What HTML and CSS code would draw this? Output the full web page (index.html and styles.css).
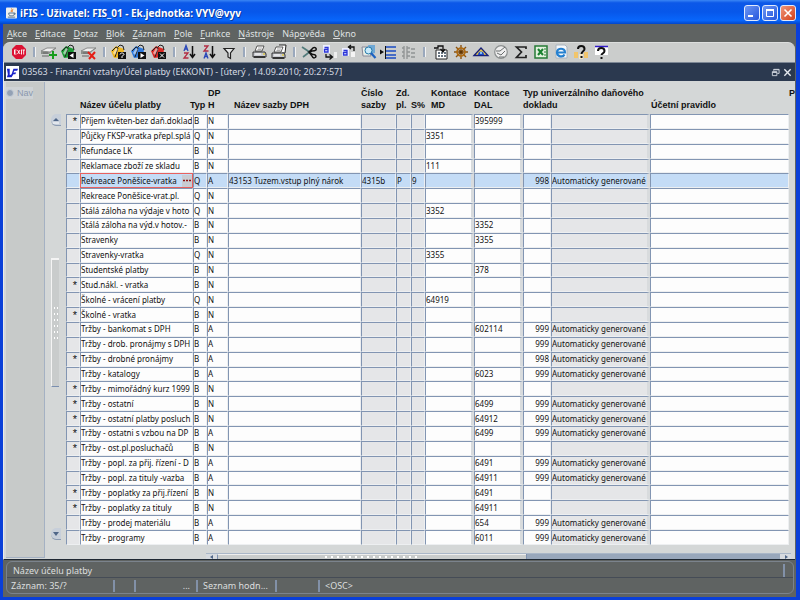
FILE: index.html
```html
<!DOCTYPE html>
<html lang="cs">
<head>
<meta charset="utf-8">
<title>iFIS - Uživatel: FIS_01 - Ek.jednotka: VYV@vyv</title>
<link rel="stylesheet" href="styles.css">
</head>
<body>
<svg class="defs" aria-hidden="true">
  <defs>
    <g id="folder"><path d="M1 7 6 2l8 3-1 8-9 1z" fill="currentColor"/><path d="M2 7l4-4 2 1-3 9M8 3l2-2 3 1 1 4" fill="none" stroke="#222" stroke-width="1"/><path d="M6 4l2 1-3 6-2-2z" fill="#fff" opacity=".55"/></g>
    <g id="rec"><path d="M1 7 7 4h9l-6 4z" fill="#efefef" stroke="#777" stroke-width=".8"/><path d="M1 7v3h8l6-5v-1l-5 4z" fill="#8b8f8b"/><path d="M2 12h7M3 9h5" stroke="#666"/></g>
    <g id="printer"><path d="M5 7 7 2h7l-2 5z" fill="#fff" stroke="#333" stroke-width=".8"/><path d="M8 4h4M7.500 5.500h4" stroke="#888" stroke-width=".7"/><path d="M3 8h12l1 2v3H3z" fill="#c9cbd0" stroke="#222" stroke-width=".9"/><path d="M4 12h11v2H4z" fill="#333"/><path d="M5 10h6" stroke="#fff"/><path d="M13 10h2" stroke="#e6c400"/></g>
  </defs>
</svg>
<div class="window">
  <header class="titlebar">
    <svg class="java" viewBox="0 0 12 12"><rect width="12" height="12" rx="1" fill="#eef0ee"/><path d="M6 1c2 2-2 2 0 4M8 2c-2 1-1 2-1 3" stroke="#e2731c" fill="none"/><path d="M3 6h6c0 3-1 3-3 3S3 9 3 6zM9 6c2 0 1 2 0 2M2 10.500h8" stroke="#4d6b88" fill="none"/></svg>
    <h1>iFIS - Uživatel: FIS_01 - Ek.jednotka: VYV@vyv</h1>
    <div class="winbtns">
      <button aria-label="Minimalizovat"><svg viewBox="0 0 14 14"><path d="M3 10h5" stroke="#fff" stroke-width="2"/></svg></button>
      <button aria-label="Maximalizovat"><svg viewBox="0 0 14 14"><path d="M3 4h8" stroke="#fff" stroke-width="2"/><path d="M3.500 4v6.500h7V4" stroke="#fff" fill="none"/></svg></button>
      <button class="close" aria-label="Zavřít"><svg viewBox="0 0 14 14"><path d="M3.500 3.500l7 7M10.500 3.500l-7 7" stroke="#fff" stroke-width="1.600"/></svg></button>
    </div>
  </header>
  <nav class="menu">
    <a href="#"><u>A</u>kce</a><a href="#"><u>E</u>ditace</a><a href="#"><u>D</u>otaz</a><a href="#"><u>B</u>lok</a><a href="#"><u>Z</u>áznam</a><a href="#"><u>P</u>ole</a><a href="#"><u>F</u>unkce</a><a href="#"><u>N</u>ástroje</a><a href="#">Náp<u>o</u>věda</a><a href="#"><u>O</u>kno</a>
  </nav>
  <div class="toolbar">
    <button aria-label="Konec"><svg viewBox="0 0 18 16"><path d="M6 1h6l4 4v6l-4 4H6l-4-4V5z" fill="#dc1233"/><path d="M4 6h2.500M4 8h2M4 10h2.500M4.500 6v4M7.500 6l2.500 4M10 6l-2.500 4M11.500 5.500v5M12.500 6H15M13.700 6v4.500" stroke="#fff" stroke-width=".9"/></svg></button>
    <i class="sep"></i>
    <button aria-label="Vložit záznam"><svg viewBox="0 0 18 16"><use href="#rec"/><path d="M13 7v8M9 11h8" stroke="#179c1c" stroke-width="2"/></svg></button>
    <button aria-label="Uložit"><svg class="green" viewBox="0 0 18 16"><use href="#folder"/><path d="M8 8h8v7H8z" fill="#111"/><path d="M13.500 9v5l-4-2.500z" fill="#fff"/></svg></button>
    <button aria-label="Smazat záznam"><svg viewBox="0 0 18 16"><use href="#rec"/><path d="M8 8l7 7M15 8l-6 7" stroke="#e51d14" stroke-width="2"/></svg></button>
    <i class="sep"></i>
    <button aria-label="Zadat dotaz"><svg class="yellow" viewBox="0 0 18 16"><use href="#folder"/><path d="M8 8h8v7H8z" fill="#111"/><path d="M10 10.500c0-2 4-2 4 0 0 1-2 1-2 2v1.500" stroke="#fff" fill="none"/></svg></button>
    <button aria-label="Provést dotaz"><svg class="blue" viewBox="0 0 18 16"><use href="#folder"/><path d="M8 8h8v7H8z" fill="#111"/><path d="M10.500 9v5l4-2.500z" fill="#fff"/></svg></button>
    <button aria-label="Zrušit dotaz"><svg class="red" viewBox="0 0 18 16"><use href="#folder"/><path d="M8 8h8v7H8z" fill="#111"/><path d="M10 9.500l4 4M14 9.500l-4 4" stroke="#fff"/></svg></button>
    <i class="sep"></i>
    <button aria-label="Seřadit vzestupně"><svg viewBox="0 0 18 16"><path d="M4 7l2-5.500L8 7M5 5h2.500" stroke="#2947b8" fill="none" stroke-width="1.300"/><path d="M4 9h4l-4 5h4.500" stroke="#b32c43" fill="none" stroke-width="1.300"/><path d="M12.500 2v11M10 10l2.500 3.500L15 10" stroke="#111" fill="none" stroke-width="1.500"/></svg></button>
    <button aria-label="Seřadit sestupně"><svg viewBox="0 0 18 16"><path d="M4 2h4L4 7h4.500" stroke="#b32c43" fill="none" stroke-width="1.300"/><path d="M4 14.500L6 9l2 5.500M5 12.500h2.500" stroke="#2947b8" fill="none" stroke-width="1.300"/><path d="M12.500 2v11M10 10l2.500 3.500L15 10" stroke="#111" fill="none" stroke-width="1.500"/></svg></button>
    <button aria-label="Filtr"><svg viewBox="0 0 18 16"><path d="M4 4.500h10L10.500 9v5.500L8 13V9z" stroke="#222" fill="#e4e6e6" stroke-width="1.200"/></svg></button>
    <i class="sep"></i>
    <button aria-label="Tisk"><svg viewBox="0 0 18 16"><use href="#printer"/></svg></button>
    <button aria-label="Tisk sestavy"><svg viewBox="0 0 18 16"><path d="M9 1h7l-1 8h-3" fill="#fff" stroke="#222"/><use href="#printer" x="-1" y="1"/></svg></button>
    <i class="sep"></i>
    <button aria-label="Vyjmout"><svg viewBox="0 0 18 16"><path d="M2 3l9 6M3 13l9-7" stroke="#527b7b" stroke-width="1.600"/><path d="M9 8l3-3c2-3 5-1 4 1-1 1-3 1-4 1l-3 1 3 2c1 1 3 0 4 2 0 2-3 3-4 0z" stroke="#111" fill="none" stroke-width="1.500"/></svg></button>
    <button aria-label="Kopírovat"><svg viewBox="0 0 18 16"><path d="M3 1h7v8H3z" fill="#eef0ff"/><path d="M4.500 3.500H8V8H4.500V5.500H8" stroke="#2b35d8" fill="none" stroke-width="1.300"/><path d="M6 10v3h6M9.500 10.500l3 2.500-3 2.500" stroke="#111" fill="none" stroke-width="1.300"/><path d="M14 8h3v6h-3z" fill="#eee"/></svg></button>
    <button aria-label="Vložit"><svg viewBox="0 0 18 16"><path d="M2 4h7v8H2z" fill="#eef0ff"/><path d="M3.500 6.500H7V11H3.500V8.500H7" stroke="#2b35d8" fill="none" stroke-width="1.300"/><path d="M8 3h6v4M11 1L8.500 3 11 5" stroke="#111" fill="none" stroke-width="1.300"/><path d="M11 8h4v5h-4z" fill="#f4f4f4"/></svg></button>
    <button aria-label="Hledat"><svg viewBox="0 0 18 16"><path d="M2 3h6l3 9H3z" fill="#e8efe8" stroke="#889"/><path d="M8 1h7v8l-4 1z" fill="#6fa8d5"/><circle cx="8.500" cy="6.500" r="3.500" fill="#c9eafa" stroke="#2278a8"/><path d="M11 9l4.500 5" stroke="#1b61c1" stroke-width="2.200"/></svg></button>
    <button aria-label="Seznam hodnot"><svg viewBox="0 0 18 16"><path d="M6 3h10M6 7h10M6 11h10M6 14h10" stroke="#1c4cc2" stroke-width="1.700"/><path d="M5.500 2v13" stroke="#111"/><path d="M0 5.500l4 2.500-4 2.500z" fill="#111"/></svg></button>
    <button aria-label="Strom"><svg viewBox="0 0 18 16"><path d="M4 2v13M7 2v13M4 4h-2M4 8h-2M4 12h-2M7 4h3M7 8h3M7 12h3M11 5h4M11 9h4M11 13h4" stroke="#909494" fill="none" stroke-width="1.300"/></svg></button>
    <i class="sep"></i>
    <div class="tail">
    <button aria-label="Kalendář"><svg viewBox="0 0 18 16"><path d="M4 6h11v9H4z" fill="#fff" stroke="#222"/><path d="M6 9h2M9 9h2M12 9h2M6 12h2M9 12h2M12 12h2" stroke="#345" stroke-width="1.500"/><path d="M2 4h4V2h5v5M8.500 5l2.500 3 2-3" fill="none" stroke="#111" stroke-width="1.300"/></svg></button>
    <button aria-label="Kormidlo"><svg viewBox="0 0 18 16"><path d="M9 1v14M2 8h14M4 3l10 10M14 3L4 13" stroke="#8a5311" stroke-width="1.400"/><circle cx="9" cy="8" r="4" fill="none" stroke="#b06b10" stroke-width="1.600"/><circle cx="9" cy="8" r="1.500" fill="#5d3505"/></svg></button>
    <button aria-label="Přehled"><svg viewBox="0 0 18 16"><path d="M2 11.500L9 4l7 7.500z" fill="#eecb4b" stroke="#17217a" stroke-width="1.300"/><path d="M6 11a3 3.500 0 016 0z" fill="#1c49c5"/><circle cx="9" cy="9" r="1" fill="#a4e4ff"/></svg></button>
    <button aria-label="Hodiny"><svg viewBox="0 0 18 16"><circle cx="9" cy="8" r="6.300" fill="#eee" stroke="#8b8f8f" stroke-width="1.200"/><path d="M4 7h4l5-4M5 9l4 2 4-4M7 13h5" stroke="#696d6d" fill="none"/></svg></button>
    <button aria-label="Součet"><svg viewBox="0 0 18 16"><path d="M14 5V3H4.500l5 5-5 5.500H14V11" stroke="#222" fill="none" stroke-width="1.700"/></svg></button>
    <button aria-label="Excel"><svg viewBox="0 0 18 16"><path d="M3 2h12v12H3z" fill="#e3f1df" stroke="#267b36" stroke-width="1.500"/><path d="M6 5l5 6M11 5l-5 6" stroke="#1a8130" stroke-width="2"/><path d="M12 5h2M12 8h2M12 11h2" stroke="#267b36"/></svg></button>
    <button aria-label="Prohlížeč"><svg viewBox="0 0 18 16"><path d="M4 1h9l2 2v11H4z" fill="#f5f8fb" stroke="#a9b4c0"/><path d="M5 8.500h8c0-5-8-5-8 0 0 4.500 6 5 7.500 2" stroke="#2580d0" fill="none" stroke-width="2.200"/></svg></button>
    <button aria-label="Nápověda k poli"><svg viewBox="0 0 18 16"><path d="M2 8h4v6H2zM12 8h4v6h-4z" fill="#f1c56b"/><path d="M7 10h4v5H7z" fill="#f4e6c3"/><path d="M6 5c0-4 6.500-4 6.500 0 0 2.500-3 2-3 5" stroke="#111" fill="none" stroke-width="2"/><path d="M8.500 12h2v2h-2z" fill="#111"/></svg></button>
    <button aria-label="Nápověda"><svg viewBox="0 0 18 16"><path d="M3 3h13v8H3z" fill="#fff"/><path d="M3 2.500h13" stroke="#3019c8" stroke-width="1.500"/><path d="M6 7c0-4 6.500-4 6.500 0 0 2.500-3 2-3 4" stroke="#111" fill="none" stroke-width="2"/><path d="M8.500 13h2v2h-2z" fill="#111"/></svg></button>
    </div>
  </div>
  <section class="doc">
    <div class="doctitle">
      <svg class="logo" viewBox="0 0 14 14"><path d="M0 0h14v14H0z" fill="#fff"/><path d="M1 3h3v7l2-1L8 3h5l-1 2H9L8 7h3l-1 2H8l-2 3H1l1-3z" fill="#1720c9"/></svg>
      <h2>03563 - Finanční vztahy/Účel platby (EKKONT) - [úterý , 14.09.2010; 20:27:57]</h2>
      <button aria-label="Obnovit okno"><svg viewBox="0 0 10 10"><path d="M3 3V1.500h6V6H7M1.500 4h5v4.500h-5zM3 2h6M1.500 5h5" stroke="#d5dae2" fill="none"/></svg></button>
      <button aria-label="Zavřít okno"><svg viewBox="0 0 10 10"><path d="M1.500 1.500l7 7M8.500 1.500l-7 7" stroke="#e6eaf0" stroke-width="1.500"/></svg></button>
    </div>
    <div class="body">
      <aside class="side"><button class="nav"><i></i>Nav</button></aside>
      <main class="form">
        <div class="vscroll">
          <button class="arrow" aria-label="Nahoru"><svg viewBox="0 0 10 10"><path d="M2 6l3-3 3 3z" fill="#4f6688"/><path d="M2 8h6" stroke="#fff"/></svg></button>
          <div class="vtrack"><div class="vthumb"><i></i></div></div>
          <button class="arrow" aria-label="Dolů"><svg viewBox="0 0 10 10"><path d="M2 3h6L5 7z" fill="#4f6688"/></svg></button>
        </div>
        <div class="right">
          <table>
            <colgroup><col class="c14"><col class="cname"><col class="c14"><col class="cdp"><col class="crate"><col class="cnum"><col class="c15"><col class="c14"><col class="cacc"><col class="cacc"><col class="cdoc"><col class="cauto"><col><col class="clast"></colgroup>
            <thead><tr><th></th><th id="hname">Název účelu platby</th><th><span class="typ">Typ</span></th><th class="one">DP<br>H</th><th class="in">Název sazby DPH</th><th>Číslo<br>sazby</th><th>Zd.<br>pl.</th><th>S%</th><th class="in">Kontace<br>MD</th><th>Kontace<br>DAL</th><th colspan="2">Typ univerzálního daňového<br>dokladu</th><th class="one">Účetní pravidlo</th><th>P<br>&nbsp;</th></tr></thead>
            <tbody id="rows"></tbody>
          </table>
          <div class="hscroll"><button aria-label="Vlevo"><svg viewBox="0 0 10 6"><path d="M6 1v4L3 3z" fill="#4f6688"/></svg></button><div class="hthumb"><i></i></div><div class="htrack"></div><button aria-label="Vpravo"><svg viewBox="0 0 10 6"><path d="M4 1v4l3-2z" fill="#4f6688"/></svg></button></div>
        </div>
      </main>
    </div>
  </section>
  <footer class="status">
    <div class="hint"><span>Název účelu platby</span></div>
    <div class="cells"><span class="s1">Záznam: 35/?</span><span class="s2"></span><span class="s3">...</span><span class="s4">Seznam hodn...</span><span class="s5"></span><span class="s6">&lt;OSC&gt;</span></div>
  </footer>
</div>
<script src="script.js"></script>
</body>
</html>
```
FILE: styles.css
```css
* { box-sizing: border-box; }
body { margin: 0; font: 9px/12px "Liberation Sans", Arial, sans-serif; color: #1c1c1c; }
h1, h2 { margin: 0; }
button { border: 0; padding: 0; margin: 0; background: none; font: inherit; color: inherit; display: flex; align-items: center; justify-content: center; }
svg { display: block; }
.defs { position: absolute; width: 0; height: 0; }
.window { min-height: 100vh; display: flex; flex-direction: column; background: #5f6362; border: solid #0a3fd8; border-width: 0 4px 3px 3px; }
.titlebar { height: 24px; margin: 0 -4px 0 -3px; padding: 2px 4px 0 6px; display: flex; align-items: center; background: linear-gradient(#3a86f5, #0c58e8 12%, #0757ea 50%, #0866fb 85%, #0346c8); }
.java { width: 11px; height: 12px; }
.titlebar h1 { flex: 1; margin-left: 3px; font: bold 10px/16px "Noto Sans", sans-serif; color: #fff; text-shadow: 1px 1px #0b3a9c; white-space: nowrap; }
.winbtns { display: flex; gap: 2px; }
.winbtns button { width: 16px; height: 16px; border: 1px solid #e2ebfd; border-radius: 3px; background: linear-gradient(135deg, #6d97f3, #2455dd); }
.winbtns .close { background: linear-gradient(135deg, #f0967a, #d3401a); }
.winbtns svg { width: 14px; height: 14px; }
.menu { height: 18px; padding: 2px 4px 0; display: flex; align-items: center; gap: 8px; font: 9px/14px "Noto Sans", sans-serif; }
.menu a { color: #dfe1e1; text-decoration: none; }
.toolbar { height: 20px; margin-right: 1px; padding: 0 0 1px 6px; display: flex; align-items: center; background: #cbcdcc; border-radius: 7px 7px 0 0; border-top: 1px solid #dcdedd; }
.toolbar button { width: 20px; height: 18px; }
.toolbar svg { width: 18px; height: 16px; }
.sep { width: 10px; height: 10px; display: flex; justify-content: center; }
.sep::before { content: ""; width: 2px; background: #9aa8bc; border-right: 1px solid #f2f2f2; }
.tail { display: flex; margin-left: 2px; }
.green { color: #1b9b35; }
.yellow { color: #f2b71c; }
.blue { color: #2b78dd; }
.red { color: #da2a24; }
.doc { flex: 1; display: flex; flex-direction: column; margin-right: 1px; border-left: 1px solid #e8eaea; border-bottom: 1px solid #1f2833; background: #d4d7d7; }
.doctitle { height: 19px; padding: 0 2px; border-top: 1px solid #7d8795; display: flex; align-items: center; background: #2b394f; color: #d5dae2; }
.logo { width: 13px; height: 13px; }
.doctitle h2 { flex: 1; margin-left: 3px; font: 9px/14px "Noto Sans", sans-serif; white-space: nowrap; }
.doctitle button { width: 12px; height: 12px; }
.doctitle svg:not(.logo) { width: 9px; height: 9px; }
.body { flex: 1; display: flex; }
.side { width: 39px; margin: 1px 0 1px 2px; background: #c7cac9; border-right: 1px solid #a4b1c3; border-bottom: 1px solid #a4b1c3; }
.nav { height: 12px; margin-top: 5px; gap: 3px; color: #8a98ae; background: #cfd3d6; }
.nav i { width: 8px; height: 8px; border-radius: 50%; background: #93a1b5; border: 1px solid #c7cfd8; }
.form { flex: 1; display: flex; min-width: 0; }
.vscroll { width: 21px; padding: 33px 4px 19px 6px; display: flex; flex-direction: column; }
.arrow { width: 10px; height: 12px; border-radius: 50% 0 0 50%; background: #c7cfda; border-bottom: 1px solid #8b9bb2; }
.arrow svg { width: 10px; height: 10px; }
.vtrack { flex: 1; display: flex; flex-direction: column; justify-content: flex-end; }
.vthumb { width: 8px; height: 32%; margin-bottom: 141px; display: flex; align-items: center; justify-content: center; background: #c9cccc; border-top: 2px solid #f4f4f4; border-left: 1px solid #f4f4f4; border-bottom: 1px solid #7a8fb0; }
.vthumb i { width: 6px; height: 36px; background: radial-gradient(circle, #fff 1px, transparent 1px) 0 0 / 3px 6px; }
.right { flex: 1; min-width: 0; display: flex; flex-direction: column; }
table { flex: 1; width: 100%; height: 466px; table-layout: fixed; border-spacing: 0; }
.c14 { width: 14px; } .c15 { width: 15px; } .cname { width: 113px; } .cdp { width: 21px; } .crate { width: 133px; } .cnum { width: 35px; } .cacc { width: 49px; } .cdoc { width: 28px; } .cauto { width: 99px; } .clast { width: 6px; }
th { height: 33px; padding: 0 0 3px; text-align: left; vertical-align: bottom; font-weight: bold; color: #111; white-space: nowrap; }
th.in { padding-left: 6px; }
th.one { padding-left: 1px; }
.typ { display: block; margin-left: -3px; }
td { padding: 0; border: 1px solid #edeff1; border-top-color: #8295b2; border-left-color: #8295b2; background: #fdfdfd; font: 8px/12px "Noto Sans", sans-serif; color: #111; white-space: nowrap; overflow: hidden; background-clip: padding-box; }
td.gap { border-right: 3px solid #d8dbdd; }
td.grey, td.mark { background-color: #e5e6e8; }
td.mark { text-align: center; font: 11px/12px "Liberation Sans", Arial, sans-serif; padding-left: 4px; }
td.num { text-align: right; padding-right: 1px; }
td.none { border: 0; background: none; }
.sel td:not(.none) { background-color: #c4dcf6; }
.sel td.edit { border: 1px solid #e8615f; }
.editor { display: flex; height: 12px; }
.editor input { flex: 1; min-width: 0; padding: 0; border: 0; background: none; font: inherit; color: inherit; outline: 0; }
.editor button { width: 10px; background: #c9ccd2; }
.editor svg { width: 8px; height: 3px; }
.hscroll { height: 6px; margin: 8px 4px 0 140px; display: flex; background: #c9cccc; border-top: 1px solid #aab7c8; }
.hscroll button { width: 11px; background: #d6dadf; }
.hscroll svg { width: 10px; height: 6px; }
.hthumb { flex: 310; display: flex; justify-content: center; border-left: 1px solid #7f92b0; border-top: 1px solid #eee; }
.hthumb i { width: 98px; background: radial-gradient(circle, #fff 1px, transparent 1px) 0 0 / 6px 4px; }
.htrack { flex: 255; background: #98a7bb; border-left: 1px solid #7f92b0; }
.status { height: 33px; margin: 1px 2px 3px 3px; border: 1px solid #7b838c; border-radius: 6px; color: #dcdede; font: 9px/12px "Noto Sans", sans-serif; }
.hint { height: 16px; padding: 2px 0 0 6px; border-bottom: 1px solid #454c56; display: flex; justify-content: space-between; align-items: center; }
.hint::after { content: ""; height: 13px; margin-right: 8px; border-left: 2px solid #8291a8; }
.cells { height: 15px; display: flex; align-items: center; padding-left: 4px; white-space: nowrap; }
.cells span { height: 12px; border-right: 2px solid #8291a8; }
.cells .s1 { width: 104px; } .cells .s2 { width: 21px; } .cells .s3 { width: 62px; padding-right: 6px; text-align: right; }
.cells .s4 { width: 79px; padding-left: 5px; } .cells .s5 { width: 43px; } .cells .s6 { padding-left: 5px; border: 0; }
```
FILE: script.js
```js
const G = "Automaticky generované";
// mark, name, type, VAT, MD account, DAL account, document type
const rows = [
  ["*", "Příjem květen-bez daň.doklad", "B", "N", "", "395999", ""],
  ["", "Půjčky FKSP-vratka přepl.splá", "Q", "N", "3351", "", ""],
  ["*", "Refundace LK", "B", "N", "", "", ""],
  ["", "Reklamace zboží ze skladu", "B", "N", "111", "", ""],
  ["", "Rekreace Poněšice-vratka", "Q", "A", "", "", "998"],
  ["", "Rekreace Poněšice-vrat.pl.", "Q", "N", "", "", ""],
  ["", "Stálá záloha na výdaje v hoto", "Q", "N", "3352", "", ""],
  ["", "Stálá záloha na výd.v hotov.-", "B", "N", "", "3352", ""],
  ["", "Stravenky", "B", "N", "", "3355", ""],
  ["", "Stravenky-vratka", "Q", "N", "3355", "", ""],
  ["", "Studentské platby", "B", "N", "", "378", ""],
  ["*", "Stud.nákl. - vratka", "B", "N", "", "", ""],
  ["", "Školné - vrácení platby", "Q", "N", "64919", "", ""],
  ["*", "Školné - vratka", "B", "N", "", "", ""],
  ["", "Tržby - bankomat s DPH", "B", "A", "", "602114", "999"],
  ["", "Tržby - drob. pronájmy s DPH", "B", "A", "", "", "999"],
  ["*", "Tržby - drobné pronájmy", "B", "A", "", "", "998"],
  ["", "Tržby - katalogy", "B", "A", "", "6023", "999"],
  ["*", "Tržby - mimořádný kurz 1999", "B", "N", "", "", ""],
  ["*", "Tržby - ostatní", "B", "N", "", "6499", "999"],
  ["*", "Tržby - ostatní platby posluch", "B", "N", "", "64912", "999"],
  ["*", "Tržby - ostatni s vzbou na DP", "B", "A", "", "6499", "999"],
  ["*", "Tržby - ost.pl.posluchačů", "B", "N", "", "", ""],
  ["", "Tržby - popl. za přij. řízení - D", "B", "A", "", "6491", "999"],
  ["", "Tržby - popl. za tituly -vazba", "B", "A", "", "64911", "999"],
  ["*", "Tržby - poplatky za přij.řízení", "B", "N", "", "6491", ""],
  ["*", "Tržby - poplatky za tituly", "B", "N", "", "64911", ""],
  ["", "Tržby - prodej materiálu", "B", "A", "", "654", "999"],
  ["", "Tržby - programy", "B", "A", "", "6011", "999"]
];
const editor = '<div class="editor"><input aria-labelledby="hname" value="Rekreace Poněšice-vratka"><button aria-label="Seznam hodnot"><svg viewBox="0 0 8 3"><path d="M0 1.500h2M3 1.500h2M6 1.500h2" stroke="#8c1010" stroke-width="1.500"/></svg></button></div>';
document.getElementById("rows").innerHTML = rows.map(([mark, name, type, vat, md, dal, doc], i) => {
  const sel = i === 4;
  return `<tr${sel ? ' class="sel"' : ""}><td class="mark">${mark}</td>` +
    (sel ? `<td class="edit">${editor}</td>` : `<td>${name}</td>`) +
    `<td>${type}</td><td>${vat}</td><td>${sel ? "43153 Tuzem.vstup plný nárok" : ""}</td>` +
    `<td class="grey">${sel ? "4315b" : ""}</td><td class="grey">${sel ? "P" : ""}</td><td class="grey">${sel ? "9" : ""}</td>` +
    `<td class="gap">${md}</td><td class="gap">${dal}</td><td class="num">${doc}</td>` +
    `<td class="grey gap">${doc ? G : ""}</td><td></td><td class="none"></td></tr>`;
}).join("");
```
